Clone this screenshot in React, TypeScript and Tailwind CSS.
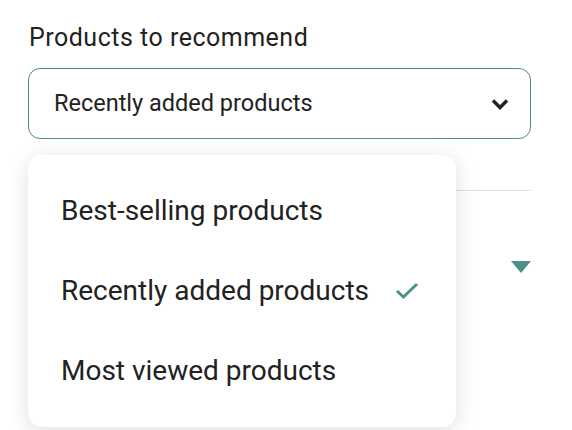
import React from "react";

const options = ["Best-selling products", "Recently added products", "Most viewed products"];

const App: React.FC = () => {
  const selected = "Recently added products";

  return (
    <div className="min-h-screen bg-white font-['Roboto',sans-serif] text-[#222222] overflow-hidden">
      <div className="relative w-[503px] ml-[28px] pt-[22px]">
        <label className="block text-[25px] leading-[32px] tracking-[0.5px] pl-px">Products to recommend</label>

        <button className="mt-[14px] w-full h-[71px] flex items-center justify-between pl-[25px] pr-[20px] border-[1.5px] border-[#4e8c86] rounded-[12px] text-[23.5px]">
          <span>{selected}</span>
          <svg width="20" height="14" viewBox="0 0 20 14">
            <polyline points="3,3.5 10,10.5 17,3.5" fill="none" stroke="#222" strokeWidth="3.4" />
          </svg>
        </button>

        {/* content underneath the menu */}
        <div className="mt-[51px] border-t border-[#e3e3e3]" />
        <div className="h-[70px]" />
        <div className="flex justify-end">
          <svg width="20" height="12" viewBox="0 0 20 12">
            <polygon points="0,0 20,0 10,12" fill="#4e8f89" />
          </svg>
        </div>
        <div className="h-[152px]" />
        <div className="flex items-center gap-[40px] pl-[2px]">
          <span className="w-[22px] h-[22px] rounded-full border-2 border-[#9a9a9a]" />
          <span className="text-[24px]">Specific products</span>
        </div>

        {/* open menu */}
        <div className="absolute left-0 top-[155px] w-[428px] bg-white rounded-[14px] py-4 shadow-[0_4px_22px_rgba(0,0,0,0.13)]">
          {options.map((opt) => (
            <div key={opt} className="h-20 flex items-center justify-between pl-[33px] pr-[37px] text-[28px]">
              <span>{opt}</span>
              {opt === selected && (
                <svg width="24" height="18" viewBox="0 0 24 18">
                  <polyline points="2,9 8.5,15 22,2" fill="none" stroke="#4e8f89" strokeWidth="3" />
                </svg>
              )}
            </div>
          ))}
        </div>
      </div>
    </div>
  );
};

export default App;
